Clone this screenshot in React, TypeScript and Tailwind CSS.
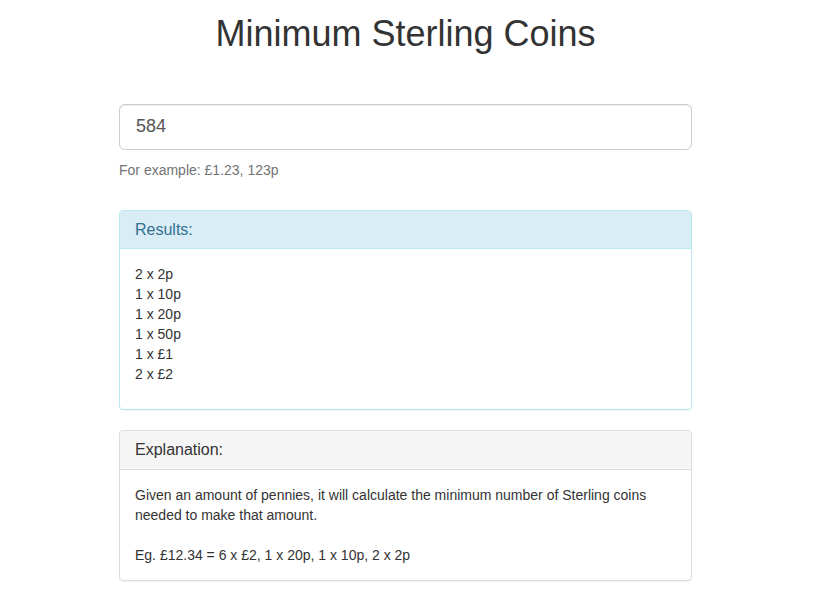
export default function App() {
  const results = ["2 x 2p", "1 x 10p", "1 x 20p", "1 x 50p", "1 x £1", "2 x £2"];

  return (
    <div className="min-h-screen bg-white font-['Liberation_Sans',Arial,sans-serif] text-[14px] leading-[20px] text-[#333]">
      <h1 className="pt-[14px] pr-[7px] text-center text-[36px] leading-[39.6px] font-normal text-[#333]">
        Minimum Sterling Coins
      </h1>

      <div className="ml-[119px] mt-[50px] w-[573px]">
        <input
          type="text"
          defaultValue="584"
          className="block h-[46px] w-full rounded-[6px] border border-[#ccc] bg-white px-[16px] text-[18px] text-[#555] shadow-[inset_0_1px_1px_rgba(0,0,0,0.075)] outline-none"
        />
        <p className="mt-[10px] text-[#737373]">For example: £1.23, 123p</p>

        <div className="mt-[30px] rounded-[4px] border border-[#bce8f1] bg-white shadow-[0_1px_1px_rgba(0,0,0,0.05)]">
          <div className="rounded-t-[3px] border-b border-[#bce8f1] bg-[#d9edf7] px-[15px] py-[10px] text-[16px] leading-[17.6px] text-[#31708f]">
            Results:
          </div>
          <div className="px-[15px] pt-[15px] pb-[25px]">
            {results.map((r) => (
              <div key={r}>{r}</div>
            ))}
          </div>
        </div>

        <div className="mt-[20px] rounded-[4px] border border-[#ddd] bg-white shadow-[0_1px_1px_rgba(0,0,0,0.05)]">
          <div className="rounded-t-[3px] border-b border-[#ddd] bg-[#f5f5f5] px-[15px] py-[10px] text-[16px] leading-[17.6px] text-[#333]">
            Explanation:
          </div>
          <div className="p-[15px]">
            <p>
              Given an amount of pennies, it will calculate the minimum number of Sterling coins
              needed to make that amount.
            </p>
            <p className="mt-[20px]">Eg. £12.34 = 6 x £2, 1 x 20p, 1 x 10p, 2 x 2p</p>
          </div>
        </div>
      </div>
    </div>
  );
}
